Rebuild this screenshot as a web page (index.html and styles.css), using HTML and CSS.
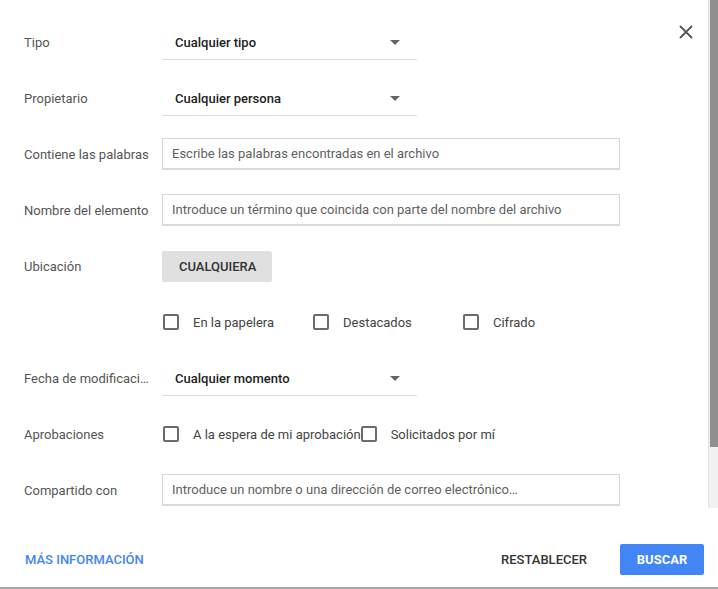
FILE: index.html
```html
<!DOCTYPE html>
<html lang="es">
<head>
<meta charset="utf-8">
<title>Búsqueda avanzada</title>
<link rel="stylesheet" href="styles.css">
</head>
<body>
<div class="dialog">
  <div class="main">
    <div class="content">
      <button class="close" aria-label="Cerrar">
        <svg width="14" height="14" viewBox="0 0 14 14"><path d="M1 1L13 13M13 1L1 13" stroke="#555" stroke-width="1.8" fill="none"/></svg>
      </button>
      <div class="row">
        <div class="label">Tipo</div>
        <div class="select"><span>Cualquier tipo</span><i class="arrow"></i></div>
      </div>
      <div class="row">
        <div class="label">Propietario</div>
        <div class="select"><span>Cualquier persona</span><i class="arrow"></i></div>
      </div>
      <div class="row">
        <div class="label">Contiene las palabras</div>
        <div class="input">Escribe las palabras encontradas en el archivo</div>
      </div>
      <div class="row">
        <div class="label">Nombre del elemento</div>
        <div class="input">Introduce un término que coincida con parte del nombre del archivo</div>
      </div>
      <div class="row">
        <div class="label">Ubicación</div>
        <div class="btn-gray">CUALQUIERA</div>
      </div>
      <div class="row">
        <div class="label"></div>
        <div class="checks">
          <label class="check col"><span class="box"></span>En la papelera</label>
          <label class="check col"><span class="box"></span>Destacados</label>
          <label class="check col"><span class="box"></span>Cifrado</label>
        </div>
      </div>
      <div class="row">
        <div class="label">Fecha de modificaci…</div>
        <div class="select"><span>Cualquier momento</span><i class="arrow"></i></div>
      </div>
      <div class="row">
        <div class="label">Aprobaciones</div>
        <div class="checks">
          <label class="check"><span class="box"></span>A la espera de mi aprobación</label>
          <label class="check"><span class="box"></span>Solicitados por mí</label>
        </div>
      </div>
      <div class="row">
        <div class="label">Compartido con</div>
        <div class="input">Introduce un nombre o una dirección de correo electrónico…</div>
      </div>
    </div>
    <div class="scrollbar"><div class="thumb"></div></div>
  </div>
  <div class="footer">
    <a class="link">MÁS INFORMACIÓN</a>
    <div class="actions">
      <span class="flat">RESTABLECER</span>
      <span class="primary">BUSCAR</span>
    </div>
  </div>
</div>
</body>
</html>
```

FILE: styles.css
```css
* { box-sizing: border-box; }
html, body { margin: 0; padding: 0; background: #fff; }
body {
  font-family: Roboto, "Liberation Sans", Arial, sans-serif;
  font-size: 13px;
  color: #222;
  width: 718px;
  height: 589px;
  overflow: hidden;
}
.dialog {
  width: 718px;
  height: 589px;
  display: flex;
  flex-direction: column;
  border-bottom: 2px solid #a6a6a6;
}
.main {
  height: 508px;
  display: flex;
}
.content {
  flex: 1;
  position: relative;
  padding-top: 14px;
}
.close {
  position: absolute;
  top: 25px;
  left: 679px;
  width: 14px;
  height: 14px;
  padding: 0;
  border: 0;
  background: none;
  display: flex;
}
.scrollbar {
  width: 10px;
  background: #f1f1f1;
  border-left: 1px solid #e2e2e2;
}
.thumb {
  height: 447px;
  margin-left: 1px;
  background: #8f8f8f;
}
.row {
  height: 56px;
  display: flex;
  align-items: center;
  padding-left: 24px;
}
.label {
  width: 138px;
  flex: none;
  color: #555;
  white-space: nowrap;
}
.select {
  width: 255px;
  height: 34px;
  margin-top: 1px;
  display: flex;
  align-items: center;
  justify-content: space-between;
  padding: 0 17px 0 13px;
  border-bottom: 1px solid #dcdcdc;
  font-weight: 500;
  color: #222;
}
.arrow {
  width: 0;
  height: 0;
  border-left: 5px solid transparent;
  border-right: 5px solid transparent;
  border-top: 5px solid #666;
}
.input {
  width: 458px;
  height: 32px;
  display: flex;
  align-items: center;
  padding-left: 9px;
  border: 1px solid #d6d6d6;
  border-bottom: 2px solid #dadada;
  color: #5f5f5f;
  white-space: nowrap;
}
.btn-gray {
  height: 31px;
  padding: 0 16px 0 17px;
  display: flex;
  align-items: center;
  background: #e0e0e0;
  border-radius: 2px;
  font-weight: 500;
  color: #333;
}
.checks {
  display: flex;
  align-items: center;
  padding-left: 1px;
}
.check {
  display: flex;
  align-items: center;
  color: #444;
}
.check.col { width: 150px; }
.box {
  width: 16px;
  height: 16px;
  border: 2px solid #6b6b6b;
  border-radius: 2px;
  margin-right: 14px;
  flex: none;
}
.footer {
  flex: 1;
  display: flex;
  align-items: center;
  justify-content: space-between;
  padding: 23px 14px 0 25px;
  font-weight: 500;
}
.link { color: #4285f4; }
.actions {
  display: flex;
  align-items: center;
}
.flat {
  color: #333;
  margin-right: 33px;
}
.primary {
  width: 84px;
  height: 31px;
  display: flex;
  align-items: center;
  justify-content: center;
  background: #4285f4;
  color: #fff;
  border-radius: 2px;
  font-weight: 700;
}
```
